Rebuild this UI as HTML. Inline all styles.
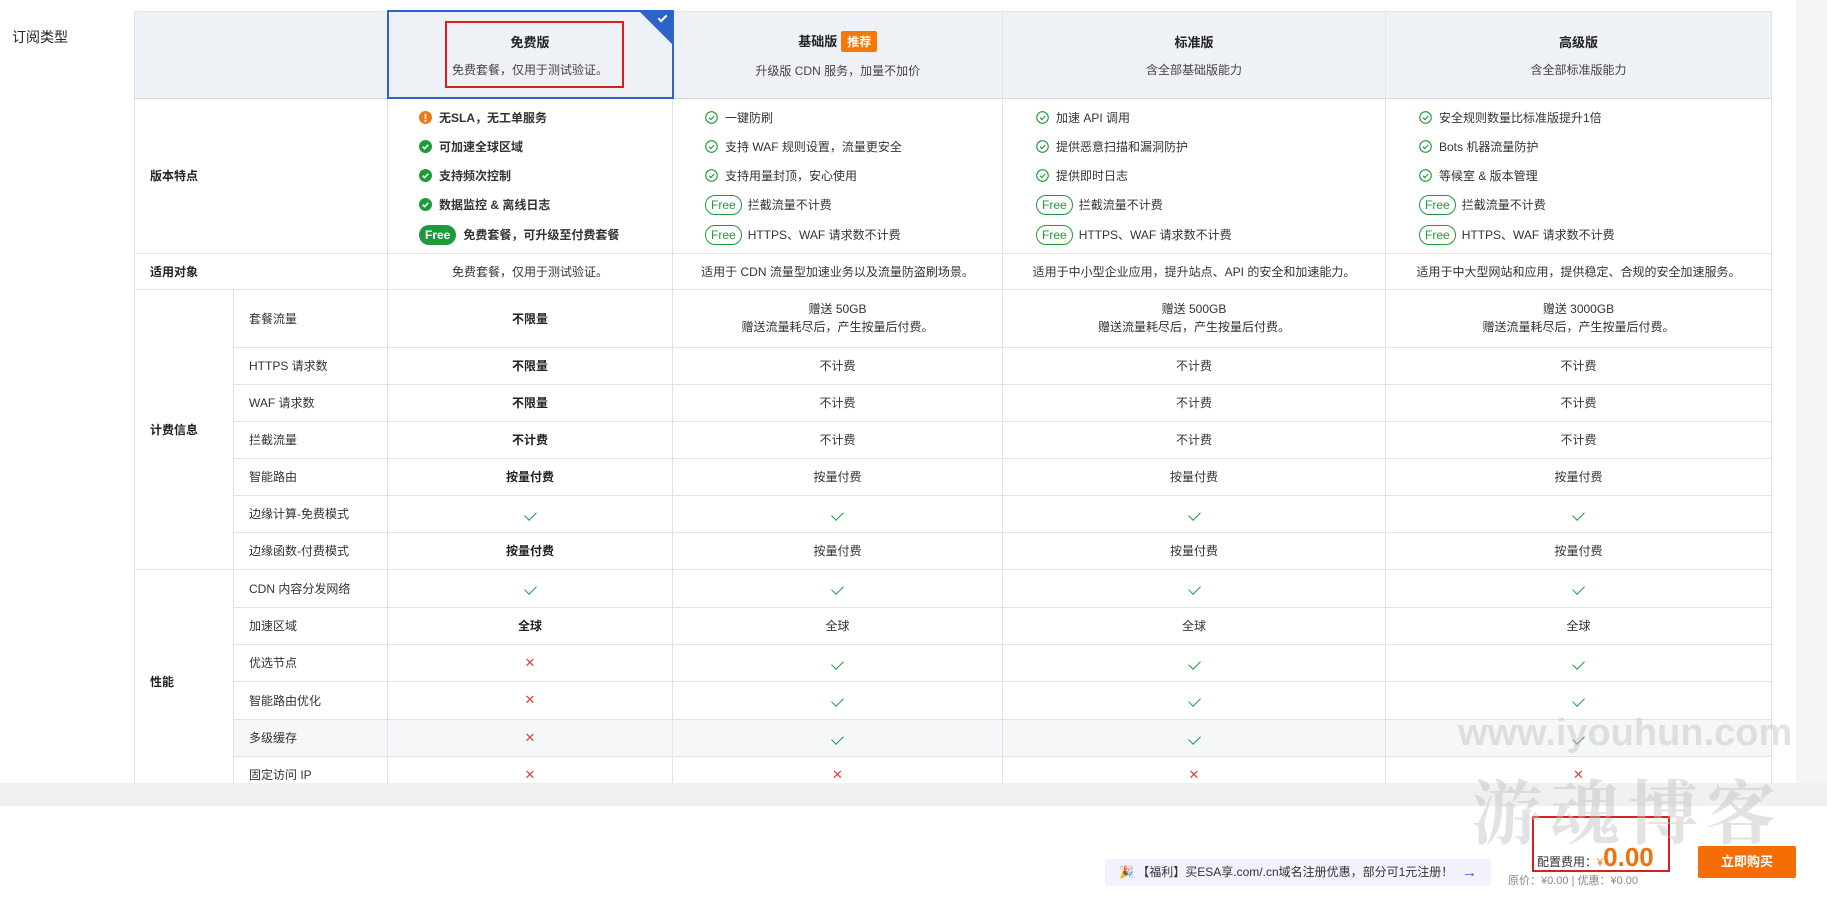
<!DOCTYPE html>
<html><head><meta charset="utf-8"><style>
*{box-sizing:border-box;margin:0;padding:0}
body{width:1827px;height:900px;position:relative;overflow:hidden;background:#fff;font-family:"Liberation Sans","Noto Sans CJK SC",sans-serif;color:#333;font-size:12px}
.abs{position:absolute}
table{position:absolute;left:134px;top:10px;border-collapse:collapse;table-layout:fixed}
td{border:1px solid #e1e3e6;text-align:center;vertical-align:middle;font-size:12px;color:#333}
td.l{text-align:left;padding-left:15px;font-weight:bold;color:#222}
td.s{text-align:left;padding-left:15px;color:#333}
tr.h td{background:#eef1f6;border-bottom:1px solid #d5d8dd}
.b{font-weight:bold;color:#222}
.t{font-size:13px;font-weight:bold;color:#222}
.sub{margin-top:10px;color:#444}
.tag{display:inline-block;background:#f7780a;color:#fff;font-size:12px;font-weight:bold;padding:2px 6px;margin-left:4px;border-radius:2px}
.feat{position:absolute;font-size:12px;line-height:16px;white-space:nowrap}
.feat div{height:29px;display:flex;align-items:center}
.ic{width:13px;height:13px;margin-right:7px;flex:none}
.fo{display:inline-block;border:1px solid #1f9a3a;color:#1f9a3a;border-radius:10px;padding:1px 5px;font-size:12px;margin-right:6px}
.ff{display:inline-block;background:#1f9a3a;color:#fff;border-radius:11px;padding:2px 6px;font-size:12px;font-weight:bold;margin-right:7px}
.ck{display:inline-block;width:11px;height:7px;border-left:1.5px solid #1f9a3a;border-bottom:1.5px solid #1f9a3a;transform:rotate(-45deg);margin-top:-6px}
.x{color:#e34040;font-size:13px}
.gr{color:#333}
</style></head><body>
<div class="abs" style="left:12px;top:27px;font-size:14px;color:#222">订阅类型</div>
<div class="abs" style="left:1796px;top:0;width:31px;height:783px;background:#f4f5f7"></div>
<div class="abs" style="left:0;top:0;width:1796px;height:783px;overflow:hidden">
<table>
<colgroup><col style="width:99px"><col style="width:154px"><col style="width:285px"><col style="width:330px"><col style="width:383px"><col style="width:386px"></colgroup>
<tr class="h" style="height:87px"><td colspan="2"></td>
<td style="border:2px solid #2d62c9;position:relative"><div class="t">免费版</div><div class="sub">免费套餐，仅用于测试验证。</div>
<div style="position:absolute;right:0;top:0;width:0;height:0;border-top:32px solid #2d62c9;border-left:32px solid transparent"></div>
<div style="position:absolute;right:5px;top:3px;width:9px;height:5px;border-left:2px solid #fff;border-bottom:2px solid #fff;transform:rotate(-45deg)"></div>
<div style="position:absolute;left:56px;top:9px;width:179px;height:67px;border:2px solid #d92020"></div></td>
<td><div class="t">基础版<span class="tag">推荐</span></div><div class="sub">升级版 CDN 服务，加量不加价</div></td>
<td><div class="t">标准版</div><div class="sub">含全部基础版能力</div></td>
<td><div class="t">高级版</div><div class="sub">含全部标准版能力</div></td></tr>
<tr style="height:155px"><td colspan="2" class="l">版本特点</td><td></td><td></td><td></td><td></td></tr>
<tr style="height:36px"><td colspan="2" class="l">适用对象</td><td class="gr">免费套餐，仅用于测试验证。</td><td>适用于 CDN 流量型加速业务以及流量防盗刷场景。</td><td>适用于中小型企业应用，提升站点、API 的安全和加速能力。</td><td>适用于中大型网站和应用，提供稳定、合规的安全加速服务。</td></tr>
<tr style="height:58px"><td rowspan="7" class="l">计费信息</td><td class="s">套餐流量</td><td class="b">不限量</td><td>赠送 50GB<br><span style="line-height:20px">赠送流量耗尽后，产生按量后付费。</span></td><td>赠送 500GB<br><span style="line-height:20px">赠送流量耗尽后，产生按量后付费。</span></td><td>赠送 3000GB<br><span style="line-height:20px">赠送流量耗尽后，产生按量后付费。</span></td></tr>
<tr style="height:37px"><td class="s">HTTPS 请求数</td><td class="b">不限量</td><td>不计费</td><td>不计费</td><td>不计费</td></tr>
<tr style="height:37px"><td class="s">WAF 请求数</td><td class="b">不限量</td><td>不计费</td><td>不计费</td><td>不计费</td></tr>
<tr style="height:37px"><td class="s">拦截流量</td><td class="b">不计费</td><td>不计费</td><td>不计费</td><td>不计费</td></tr>
<tr style="height:37px"><td class="s">智能路由</td><td class="b">按量付费</td><td>按量付费</td><td>按量付费</td><td>按量付费</td></tr>
<tr style="height:37px"><td class="s">边缘计算-免费模式</td><td><span class="ck"></span></td><td><span class="ck"></span></td><td><span class="ck"></span></td><td><span class="ck"></span></td></tr>
<tr style="height:37px"><td class="s">边缘函数-付费模式</td><td class="b">按量付费</td><td>按量付费</td><td>按量付费</td><td>按量付费</td></tr>
<tr style="height:38px"><td rowspan="6" class="l">性能</td><td class="s">CDN 内容分发网络</td><td><span class="ck"></span></td><td><span class="ck"></span></td><td><span class="ck"></span></td><td><span class="ck"></span></td></tr>
<tr style="height:37px"><td class="s">加速区域</td><td class="b">全球</td><td>全球</td><td>全球</td><td>全球</td></tr>
<tr style="height:37px"><td class="s">优选节点</td><td class="x">✕</td><td><span class="ck"></span></td><td><span class="ck"></span></td><td><span class="ck"></span></td></tr>
<tr style="height:38px"><td class="s">智能路由优化</td><td class="x">✕</td><td><span class="ck"></span></td><td><span class="ck"></span></td><td><span class="ck"></span></td></tr>
<tr style="height:37px;background:#f6f7f9"><td class="s">多级缓存</td><td class="x">✕</td><td><span class="ck"></span></td><td><span class="ck"></span></td><td><span class="ck"></span></td></tr>
<tr style="height:37px"><td class="s">固定访问 IP</td><td class="x">✕</td><td class="x">✕</td><td class="x">✕</td><td class="x">✕</td></tr>
</table>

<div class="feat" style="left:419px;top:103px">
<div><svg class="ic" viewBox="0 0 14 14"><circle cx="7" cy="7" r="7" fill="#f07a12"/><rect x="6" y="3" width="2" height="5.5" fill="#fff"/><rect x="6" y="9.5" width="2" height="2" fill="#fff"/></svg><b>无SLA，无工单服务</b></div>
<div><svg class="ic" viewBox="0 0 14 14"><circle cx="7" cy="7" r="7" fill="#1f9a3a"/><path d="M4 7.2l2 2 4-4" stroke="#fff" stroke-width="1.8" fill="none"/></svg><b>可加速全球区域</b></div>
<div><svg class="ic" viewBox="0 0 14 14"><circle cx="7" cy="7" r="7" fill="#1f9a3a"/><path d="M4 7.2l2 2 4-4" stroke="#fff" stroke-width="1.8" fill="none"/></svg><b>支持频次控制</b></div>
<div><svg class="ic" viewBox="0 0 14 14"><circle cx="7" cy="7" r="7" fill="#1f9a3a"/><path d="M4 7.2l2 2 4-4" stroke="#fff" stroke-width="1.8" fill="none"/></svg><b>数据监控 &amp; 离线日志</b></div>
<div style="height:31px"><span class="ff">Free</span><b>免费套餐，可升级至付费套餐</b></div>
</div>
<div class="feat" style="left:705px;top:103px">
<div><svg class="ic" viewBox="0 0 14 14"><circle cx="7" cy="7" r="6.2" fill="none" stroke="#1f9a3a" stroke-width="1.2"/><path d="M4.3 7.2l2 2 3.6-3.8" stroke="#1f9a3a" stroke-width="1.2" fill="none"/></svg>一键防刷</div>
<div><svg class="ic" viewBox="0 0 14 14"><circle cx="7" cy="7" r="6.2" fill="none" stroke="#1f9a3a" stroke-width="1.2"/><path d="M4.3 7.2l2 2 3.6-3.8" stroke="#1f9a3a" stroke-width="1.2" fill="none"/></svg>支持 WAF 规则设置，流量更安全</div>
<div><svg class="ic" viewBox="0 0 14 14"><circle cx="7" cy="7" r="6.2" fill="none" stroke="#1f9a3a" stroke-width="1.2"/><path d="M4.3 7.2l2 2 3.6-3.8" stroke="#1f9a3a" stroke-width="1.2" fill="none"/></svg>支持用量封顶，安心使用</div>
<div><span class="fo">Free</span>拦截流量不计费</div>
<div style="height:31px"><span class="fo">Free</span>HTTPS、WAF 请求数不计费</div>
</div>
<div class="feat" style="left:1036px;top:103px">
<div><svg class="ic" viewBox="0 0 14 14"><circle cx="7" cy="7" r="6.2" fill="none" stroke="#1f9a3a" stroke-width="1.2"/><path d="M4.3 7.2l2 2 3.6-3.8" stroke="#1f9a3a" stroke-width="1.2" fill="none"/></svg>加速 API 调用</div>
<div><svg class="ic" viewBox="0 0 14 14"><circle cx="7" cy="7" r="6.2" fill="none" stroke="#1f9a3a" stroke-width="1.2"/><path d="M4.3 7.2l2 2 3.6-3.8" stroke="#1f9a3a" stroke-width="1.2" fill="none"/></svg>提供恶意扫描和漏洞防护</div>
<div><svg class="ic" viewBox="0 0 14 14"><circle cx="7" cy="7" r="6.2" fill="none" stroke="#1f9a3a" stroke-width="1.2"/><path d="M4.3 7.2l2 2 3.6-3.8" stroke="#1f9a3a" stroke-width="1.2" fill="none"/></svg>提供即时日志</div>
<div><span class="fo">Free</span>拦截流量不计费</div>
<div style="height:31px"><span class="fo">Free</span>HTTPS、WAF 请求数不计费</div>
</div>
<div class="feat" style="left:1419px;top:103px">
<div><svg class="ic" viewBox="0 0 14 14"><circle cx="7" cy="7" r="6.2" fill="none" stroke="#1f9a3a" stroke-width="1.2"/><path d="M4.3 7.2l2 2 3.6-3.8" stroke="#1f9a3a" stroke-width="1.2" fill="none"/></svg>安全规则数量比标准版提升1倍</div>
<div><svg class="ic" viewBox="0 0 14 14"><circle cx="7" cy="7" r="6.2" fill="none" stroke="#1f9a3a" stroke-width="1.2"/><path d="M4.3 7.2l2 2 3.6-3.8" stroke="#1f9a3a" stroke-width="1.2" fill="none"/></svg>Bots 机器流量防护</div>
<div><svg class="ic" viewBox="0 0 14 14"><circle cx="7" cy="7" r="6.2" fill="none" stroke="#1f9a3a" stroke-width="1.2"/><path d="M4.3 7.2l2 2 3.6-3.8" stroke="#1f9a3a" stroke-width="1.2" fill="none"/></svg>等候室 &amp; 版本管理</div>
<div><span class="fo">Free</span>拦截流量不计费</div>
<div style="height:31px"><span class="fo">Free</span>HTTPS、WAF 请求数不计费</div>
</div>
</div>

<div class="abs" style="left:0;top:783px;width:1827px;height:23px;background:#eff0f2"></div>

<div class="abs" style="left:1105px;top:859px;width:386px;height:27px;background:#f1f2fb;border-radius:3px;font-size:12px;line-height:27px;padding-left:14px;color:#333">🎉 【福利】买ESA享.com/.cn域名注册优惠，部分可1元注册！<span style="position:absolute;right:14px;color:#3a52e0;font-size:15px">→</span></div>
<div class="abs" style="left:1532px;top:816px;width:138px;height:56px;border:2px solid #d92020"></div>
<div class="abs" style="left:1537px;top:842px;font-size:12px;color:#333">配置费用：<span style="color:#f07010;font-size:11px">¥</span><span style="color:#f07010;font-size:26px;font-weight:bold">0.00</span></div>
<div class="abs" style="left:1508px;top:872px;font-size:11px;color:#888">原价：¥0.00 | 优惠：¥0.00</div>
<div class="abs" style="left:1698px;top:846px;width:98px;height:32px;background:#f56e05;color:#fff;font-size:13px;font-weight:bold;text-align:center;line-height:32px;border-radius:2px">立即购买</div>

<div class="abs" style="left:1458px;top:712px;font-size:38px;font-weight:bold;color:rgba(190,190,190,0.45)">www.iyouhun.com</div>
<div class="abs" style="left:1472px;top:758px;font-size:70px;font-weight:bold;color:rgba(190,190,190,0.45);letter-spacing:8px;font-family:'Noto Serif CJK SC','WenQuanYi Zen Hei',serif">游魂博客</div>
</body></html>
